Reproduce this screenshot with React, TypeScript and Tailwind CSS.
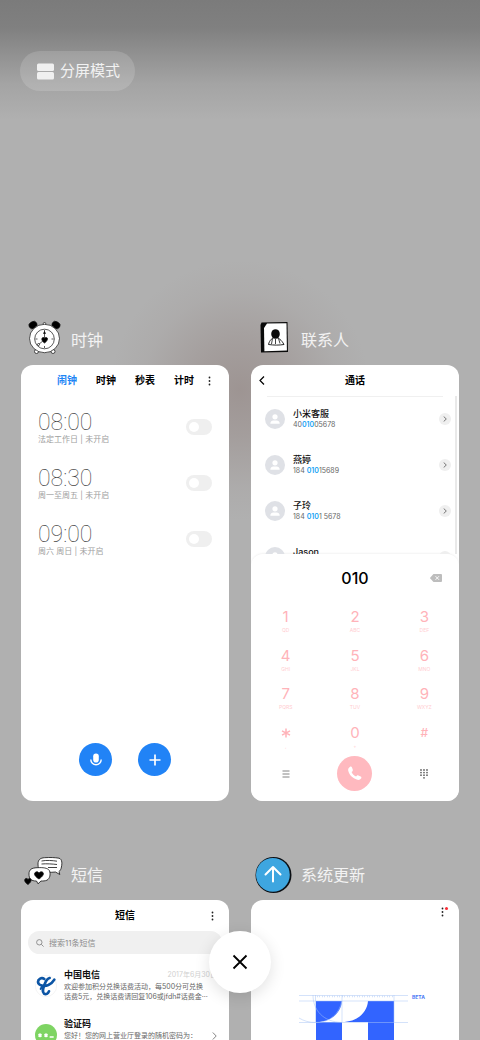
import type { ReactNode } from "react";

const ALARMS = [
  { time: "08:00", note: "法定工作日 | 未开启" },
  { time: "08:30", note: "周一至周五 | 未开启" },
  { time: "09:00", note: "周六 周日 | 未开启" },
];

const CONTACTS = [
  { name: "小米客服", before: "40", match: "010", after: "05678" },
  { name: "燕婷", before: "184 ", match: "010", after: "15689" },
  { name: "子玲", before: "184 ", match: "010", after: "1 5678" },
  { name: "Jason", before: "", match: "", after: "" },
];

const KEYS = [
  ["1", "QD"],
  ["2", "ABC"],
  ["3", "DEF"],
  ["4", "GHI"],
  ["5", "JKL"],
  ["6", "MNO"],
  ["7", "PQRS"],
  ["8", "TUV"],
  ["9", "WXYZ"],
  ["*", ","],
  ["0", "+"],
  ["#", ""],
];

function ClockIcon() {
  return (
    <svg viewBox="0 0 40 40" className="size-10" fill="none" stroke="#111" strokeWidth="0.7">
      <ellipse cx="9" cy="5" rx="4.2" ry="3.4" fill="#000" transform="rotate(-30 9 5)" />
      <ellipse cx="32" cy="5" rx="4.2" ry="3.4" fill="#000" transform="rotate(30 32 5)" />
      <circle cx="12.5" cy="31.5" r="2" fill="#fff" />
      <circle cx="29" cy="31.5" r="2" fill="#fff" />
      <circle cx="20.5" cy="3.8" r="1.3" fill="#fff" />
      <ellipse cx="20.5" cy="18.5" rx="15" ry="14.2" fill="#fff" />
      <circle cx="20.5" cy="19" r="9.8" />
      <path d="M20.500 10v2M20.500 26v2M11.500 19h2M27.500 19h2M20.500 12v6M20 20l-6 5" />
      <path d="M19.500 13.500l1-2 1 2z" fill="#000" />
      <circle cx="14.5" cy="24.5" r="1" fill="#fff" />
      <path d="M20.500 23c-3-2-3.500-5-1.500-5.500.8-.2 1.500.5 1.500 1 0-.5 1-1.300 2-1 2 .6 1 3.500-2 5.500z" fill="#000" />
    </svg>
  );
}

function ContactsIcon() {
  return (
    <svg viewBox="0 0 40 40" className="size-10">
      <path d="M7.500 2.500L33.500 2l.5 30L7 32.500 6.500 5z" fill="#0a0a0a" />
      <path d="M13 3.500l19.500-.3.4 27.300-22.500.8L10 8z" fill="#fff" />
      <path d="M14.500 24.500c1-4.500 4-7 7-7s6 2.500 8.500 7c-5 .8-10 .8-15.500 0z" fill="#fff" stroke="#111" strokeWidth="0.9" />
      <path d="M18.500 18.500l-1 5.500M21.500 19v5M24.500 18.500l1.500 5" stroke="#111" strokeWidth="0.8" />
      <ellipse cx="21.5" cy="14" rx="4.3" ry="4.8" fill="#0a0a0a" />
    </svg>
  );
}

function MessagesIcon() {
  return (
    <svg viewBox="0 0 40 40" className="size-10" stroke="#111" strokeWidth="0.8">
      <path d="M14 9c0-4.500 2.500-6 6.500-6.300 6-.4 10-.2 14.500.5 3.500 1 3.300 6 2 10.500-.5 1.500-1.500 2.300-2 2.800l.8 3-4.300-2.500c-5 .5-10 .5-14-.7-3-1.300-3.500-4-3.500-7.300z" fill="#fff" />
      <path d="M17.500 6c5-1 11-.5 15.500.2M17.500 9c5-.5 11 0 15.500.5M24 12.500h9" fill="none" />
      <path d="M5 19c0-4.500 2.500-6 8-6.300 6-.3 10.500 0 12.500 3 1.200 4 .5 7.500-2.500 9.500-2 .8-4 .8-6 .8l-3 2.800L12.500 26C7 26 5 24 5 19z" fill="#fff" />
      <path d="M15 24c-5-3-5.500-6-3-7 1.500-.5 2.800.3 3 1.300.2-1 2-1.800 3.300-1.300 2.500 1.300.5 4.500-3.300 7z" fill="#000" />
      <path d="M4 29.500c-4-2.500-4-5.500-2-6 1.200-.3 2 .5 2 1.300 0-1 1.500-1.800 2.500-1 1.500 1.200 0 4-2.500 5.700z" fill="#000" />
    </svg>
  );
}

function UpdateIcon() {
  return (
    <svg viewBox="0 0 40 40" className="size-10">
      <circle cx="19.5" cy="20" r="18" fill="#0b0f14" />
      <circle cx="18.9" cy="19.8" r="16.9" fill="#3ea6e0" />
      <path d="M19 26.500V12.500M11.500 19.500l7.500-7.500 7.500 7.500" fill="none" stroke="#fff" strokeWidth="2" strokeLinecap="round" strokeLinejoin="round" />
    </svg>
  );
}

function MoreDots() {
  return (
    <svg viewBox="0 0 3 10" className="h-[10px] w-[3px]" fill="#222">
      <circle cx="1.5" cy="1.5" r="0.9" />
      <circle cx="1.5" cy="5" r="0.9" />
      <circle cx="1.5" cy="8.5" r="0.9" />
    </svg>
  );
}

function Task({ icon, title, children }: { icon: ReactNode; title: string; children: ReactNode }) {
  return (
    <section>
      <div className="flex h-[50px] items-center gap-[7px] pl-[3px]">
        {icon}
        <h2 className="text-base text-white/85">{title}</h2>
      </div>
      <div className="flex min-h-[436px] flex-col overflow-hidden rounded-xl bg-white">{children}</div>
    </section>
  );
}

function ClockCard() {
  return (
    <>
      <div className="flex h-[31px] items-center justify-end gap-[19px] pr-[18px] text-[10px] font-bold text-black">
        <button className="text-[#1f86f5]">闹钟</button>
        <button>时钟</button>
        <button>秒表</button>
        <div className="flex items-center gap-[14px]">
          <button>计时</button>
          <button aria-label="更多">
            <MoreDots />
          </button>
        </div>
      </div>

      <div className="px-[17px] pt-[3px]">
        {ALARMS.map((a) => (
          <label key={a.time} className="flex h-14 items-center justify-between">
            <span>
              <span className="block font-[Roboto] text-[23px] leading-6 font-thin text-[#444]">{a.time}</span>
              <span className="block text-[8px] leading-[9px] text-[#a0a0a0]">{a.note}</span>
            </span>
            <input
              type="checkbox"
              className="h-4 w-[26px] appearance-none rounded-full bg-[#efefef] p-[3px] before:block before:size-[10px] before:rounded-full before:bg-white checked:bg-[#1f86f5] checked:before:ml-auto"
            />
          </label>
        ))}
      </div>

      <div className="mt-auto flex justify-center gap-[26px] pb-[25px]">
        <button aria-label="语音" className="flex size-[33px] items-center justify-center rounded-full bg-[#2183f6]">
          <svg viewBox="0 0 14 16" className="h-4 w-[14px]">
            <rect x="4.2" y="1.5" width="5.6" height="9" rx="2.8" fill="#fff" />
            <path d="M1.800 7.500a5.200 5.200 0 0 0 10.400 0" fill="none" stroke="#fff" strokeWidth="1.4" />
          </svg>
        </button>
        <button aria-label="添加" className="flex size-[33px] items-center justify-center rounded-full bg-[#2183f6]">
          <svg viewBox="0 0 12 12" className="size-3" stroke="#fff" strokeWidth="1.7">
            <path d="M6 0.500v11M0.500 6h11" />
          </svg>
        </button>
      </div>
    </>
  );
}

function ContactsCard() {
  return (
    <>
      <div className="grid h-[31px] grid-cols-3 items-center px-2">
        <button aria-label="返回" className="justify-self-start">
          <svg viewBox="0 0 6 9" className="h-[9px] w-[6px]" fill="none" stroke="#000" strokeWidth="1.2">
            <path d="M5 0.500L1 4.500l4 4" />
          </svg>
        </button>
        <h3 className="text-center text-[10px] font-bold text-black">通话</h3>
      </div>

      <div className="relative h-[158px] overflow-hidden">
        <div className="mx-4 h-px bg-[#f0f0f0]" />
        <div className="absolute top-0 right-[2px] h-full w-[2px] bg-[#e9e9e9]" />
        <ul className="-mt-px pr-2 pl-[14px]">
          {CONTACTS.map((c) => (
            <li key={c.name} className="flex h-[46px] items-center gap-2">
              <svg viewBox="0 0 20 20" className="size-5">
                <circle cx="10" cy="10" r="10" fill="#dfe1e6" />
                <circle cx="10" cy="7.8" r="2.6" fill="#fff" />
                <path d="M5.300 14.800c0-2.200 1.500-3.300 3-3.300h3.400c1.500 0 3 1.100 3 3.300z" fill="#fff" />
              </svg>
              <div className="flex-1">
                <p className="text-[9px] leading-3 font-medium text-[#111]">{c.name}</p>
                <p className="h-[10px] text-[7px] leading-[10px] text-[#666]">
                  {c.before}
                  <span className="font-semibold text-[#16a3f5]">{c.match}</span>
                  {c.after}
                </p>
              </div>
              <button aria-label={c.name} className="flex size-3 items-center justify-center rounded-full bg-[#efefef]">
                <svg viewBox="0 0 4 6" className="h-[6px] w-1" fill="none" stroke="#666" strokeWidth="0.9">
                  <path d="M0.700 0.500L3.300 3 0.700 5.500" />
                </svg>
              </button>
            </li>
          ))}
        </ul>
      </div>

      <div className="flex-1 rounded-t-xl bg-white shadow-[0_-1px_2px_rgba(0,0,0,0.05)]">
        <div className="grid h-12 grid-cols-3 items-center">
          <output className="col-start-2 text-center text-base font-medium text-black">010</output>
          <button aria-label="删除" className="mr-[17px] justify-self-end">
            <svg viewBox="0 0 12 8" className="h-2 w-3">
              <path d="M3.500 0H11a1 1 0 0 1 1 1v6a1 1 0 0 1-1 1H3.500L0.300 4.500v-1z" fill="#bdbdbd" />
              <path d="M5.500 2.200l3.500 3.600M9 2.200L5.500 5.800" stroke="#fff" strokeWidth="0.9" />
            </svg>
          </button>
        </div>

        <div className="grid h-[154px] grid-cols-3 grid-rows-4">
          {KEYS.map(([digit, letters]) => (
            <button key={digit} className="flex flex-col items-center pt-[5px] text-[#ffb3b9]">
              {digit === "*" ? (
                <svg viewBox="0 0 10 20" className="h-5 w-[10px]" stroke="#ffb3b9" strokeWidth="1.5">
                  <path d="M5 5.500v9M1 7.800l8 4.400M9 7.800l-8 4.400" />
                </svg>
              ) : digit === "#" ? (
                <span className="text-xs leading-5 font-medium">{digit}</span>
              ) : (
                <span className="text-[15px] leading-5">{digit}</span>
              )}
              <span className="text-[5px] leading-[6px] text-[#ffcdd1]">{letters}</span>
            </button>
          ))}
        </div>

        <div className="grid grid-cols-3 items-center justify-items-center pb-[10px]">
          <button aria-label="菜单">
            <svg viewBox="0 0 8 8" className="size-2" stroke="#777" strokeWidth="0.9">
              <path d="M0.500 1h7M0.500 4h7M0.500 7h7" />
            </svg>
          </button>
          <button aria-label="拨打" className="flex size-[35px] items-center justify-center rounded-full bg-[#ffb9bf]">
            <svg viewBox="0 0 24 24" className="size-[15px]" fill="#fff">
              <path d="M4.500 1.500C6 .5 7.500 1 8 2.500l1.300 3.600c.3 1 0 1.800-.8 2.500l-1.200 1c1.500 3.300 4 5.800 7.200 7.300l1.200-1.200c.7-.8 1.500-1 2.500-.6l3.600 1.500c1.400.6 1.700 2 .7 3.400-1.300 2-3.500 2.600-6 2C9 20 3.300 14 1.900 7.300 1.500 5 2.500 2.800 4.500 1.500z" />
            </svg>
          </button>
          <button aria-label="拨号盘">
            <svg viewBox="0 0 8 10" className="h-[10px] w-2" fill="#666">
              {[1, 4, 7].map((x) => [1, 3.6, 6.2].map((y) => <circle key={`${x}-${y}`} cx={x} cy={y} r="0.9" />))}
              <circle cx="4" cy="8.8" r="0.9" />
            </svg>
          </button>
        </div>
      </div>
    </>
  );
}

function MessagesCard() {
  return (
    <>
      <div className="grid h-[31px] grid-cols-3 items-center pr-[15px]">
        <h3 className="col-start-2 pl-[15px] text-center text-[10px] font-bold text-black">短信</h3>
        <button aria-label="更多" className="justify-self-end">
          <MoreDots />
        </button>
      </div>

      <label className="mx-[7px] flex h-[23px] items-center gap-[5px] rounded-full bg-[#f0f0f0] px-2">
        <svg viewBox="0 0 8 8" className="size-2" fill="none" stroke="#888" strokeWidth="0.9">
          <circle cx="3.3" cy="3.3" r="2.7" />
          <path d="M5.300 5.300l2.300 2.300" />
        </svg>
        <input
          type="text"
          aria-label="搜索短信"
          placeholder="搜索11条短信"
          className="min-w-0 flex-1 bg-transparent text-[8px] outline-none placeholder:text-[#8c8c8c]"
        />
      </label>

      <ul className="pt-[15px] pr-3 pl-[14px]">
        <li className="flex h-[49px] gap-[7px]">
          <svg viewBox="0 0 66 66" className="mt-[6px] size-[22px] shrink-0">
            <circle cx="33" cy="33" r="32" fill="#fff" stroke="#eee" strokeWidth="2" />
            <g fill="none" stroke="#0c55a5" strokeWidth="8" strokeLinecap="round">
              <path d="M28 12C20 6 9 12 9 21c1 11 19 14 31 9 9-4 14-9 18-16" />
              <path d="M44 9C34 11 32 20 28 30c-5 13-7 20-1 26 6 4 12 0 15-7" />
              <path d="M26 32c-6 3-8 5-9 10" strokeWidth="6" />
            </g>
          </svg>
          <div className="min-w-0 flex-1">
            <div className="flex items-center justify-between leading-3">
              <p className="text-[9px] font-bold text-[#111]">中国电信</p>
              <time className="text-[7px] text-[#d0d0d0]">2017年6月30日</time>
            </div>
            <p className="pt-px text-[7px] leading-[10px] whitespace-nowrap text-[#666]">
              欢迎参加积分兑换话费活动，每500分可兑换
              <br />
              话费5元，兑换话费请回复106或jfdh#话费金···
            </p>
          </div>
        </li>
        <li className="flex h-[49px] gap-[7px]">
          <svg viewBox="0 0 66 66" className="mt-[6px] size-[22px] shrink-0">
            <circle cx="33" cy="33" r="33" fill="#7ed463" />
            <path d="M15 28v12M10 31l10 6M20 31l-10 6M33 28v12M28 31l10 6M38 31l-10 6M44 39h12" stroke="#fff" strokeWidth="4" />
          </svg>
          <div className="min-w-0 flex-1">
            <p className="text-[9px] leading-3 font-bold text-[#111]">验证码</p>
            <div className="flex items-center justify-between pt-px">
              <p className="text-[7px] leading-[10px] whitespace-nowrap text-[#666]">您好！您的网上营业厅登录的随机密码为：</p>
              <svg viewBox="0 0 5 8" className="h-2 w-[5px]" fill="none" stroke="#777" strokeWidth="0.9">
                <path d="M0.800 0.500L4.200 4 0.800 7.500" />
              </svg>
            </div>
          </div>
        </li>
      </ul>
    </>
  );
}

function UpdateCard() {
  return (
    <>
      <div className="flex justify-end pt-[7px] pr-[11px]">
        <button aria-label="更多" className="flex">
          <MoreDots />
          <span className="ml-px size-[3px] rounded-full bg-red-500" />
        </button>
      </div>
      <div className="mt-[77px] ml-12 flex items-start gap-[3px]">
        <svg viewBox="0 0 110 110" className="w-[110px] shrink-0" fill="none">
          <path d="M17 7h26C42 19 32 28 18 28h-1zM69 7c-1 12-11 21-26 21h26zM69 7h26v103H69zM17 28h26v82H17z" fill="#3264ff" />
          <g stroke="#a9c4f5" strokeWidth="0.5">
            <path d="M0 1.500h109M0 7h109M0 28.500h109M16.500 1v27M43 1v27M95 1v27" />
            <path d="M43 7C40 20 31 28.500 17 28.500 10 28.500 5 27 0 24M14 1c0 15 10 27 29 27.500" />
            <path d="M18 2.500h76" strokeDasharray="0.5 2" strokeWidth="1.5" />
          </g>
        </svg>
        <span className="text-[5px] leading-[6px] font-bold text-[#4a78f5]">BETA</span>
      </div>
    </>
  );
}

export default function App() {
  return (
    <main className="relative h-screen overflow-hidden bg-[#afafaf] bg-[radial-gradient(ellipse_130px_130px_at_50%_390px,rgba(145,130,127,0.6),rgba(145,130,127,0.4)_35%,rgba(145,130,127,0.1)_75%,transparent),linear-gradient(to_bottom,#7b7b7b_0,#808080_28px,#a4a4a4_84px,#b0b0b0_120px)] font-['Inter','Noto_Sans_CJK_SC',sans-serif]">
      <header className="pt-[51px] pl-5">
        <button className="flex h-10 items-center gap-[6px] rounded-full bg-white/15 pr-[15px] pl-[17px] text-[15px] text-white/85">
          <svg viewBox="0 0 17 17" className="size-[17px]" fill="#f0f0f0">
            <rect y="0.5" width="17" height="7.5" rx="1.5" />
            <rect y="9" width="17" height="7.5" rx="1.5" />
          </svg>
          分屏模式
        </button>
      </header>

      <div className="mt-[224px] grid grid-cols-2 gap-x-[22px] gap-y-[49px] px-[21px]">
        <Task icon={<ClockIcon />} title="时钟">
          <ClockCard />
        </Task>
        <Task icon={<ContactsIcon />} title="联系人">
          <ContactsCard />
        </Task>
        <Task icon={<MessagesIcon />} title="短信">
          <MessagesCard />
        </Task>
        <Task icon={<UpdateIcon />} title="系统更新">
          <UpdateCard />
        </Task>
      </div>

      <div className="absolute inset-x-0 bottom-[47px] flex justify-center">
        <button aria-label="关闭" className="flex size-[62px] items-center justify-center rounded-full bg-white shadow-[0_4px_16px_rgba(0,0,0,0.12)]">
          <svg viewBox="0 0 16 16" className="size-4" stroke="#000" strokeWidth="1.8">
            <path d="M1.500 1.500l13 13M14.500 1.500l-13 13" />
          </svg>
        </button>
      </div>
    </main>
  );
}
